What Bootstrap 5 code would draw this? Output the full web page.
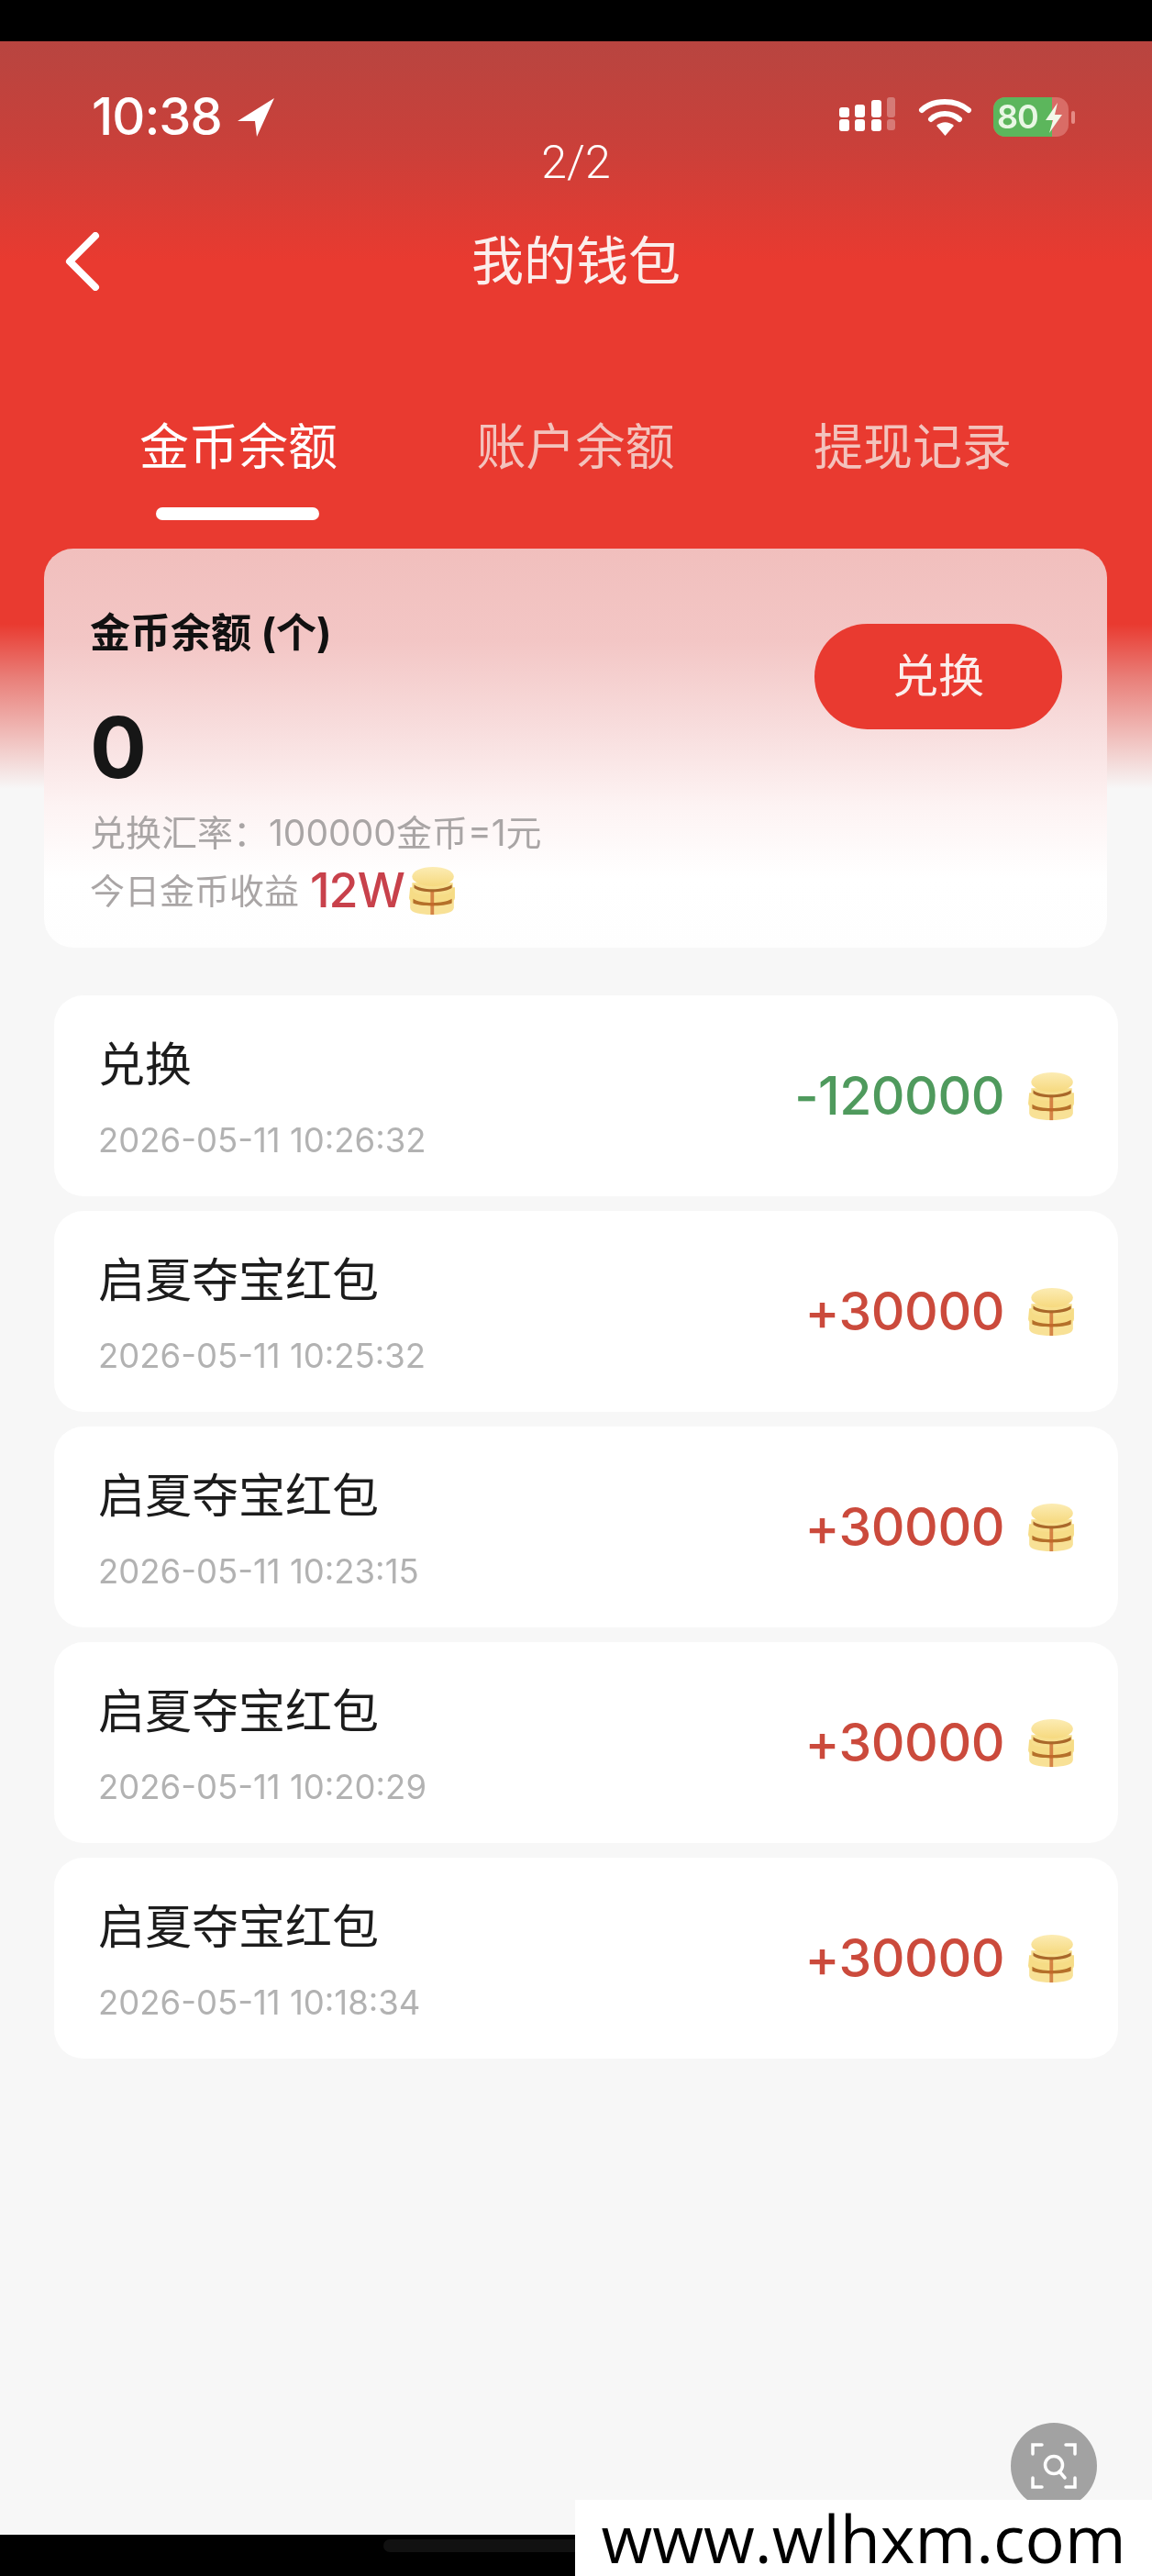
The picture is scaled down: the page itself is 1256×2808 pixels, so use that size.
<!DOCTYPE html>
<html lang="zh-CN">
<head>
  <meta charset="UTF-8" />
  <title>我的钱包</title>
  <meta name="viewport" content="width=device-width, initial-scale=1" />
  <link href="https://cdn.jsdelivr.net/npm/bootstrap@5.3.3/dist/css/bootstrap.min.css" rel="stylesheet" />
  <style>
    body {
      margin: 0;
      width: 1256px;
      height: 2808px;
      overflow: hidden;
      background: #000;
      font-family: Inter, "Noto Sans CJK SC", sans-serif;
      position: relative;
    }
    .top-black { height: 45px; background: #000; }
    .screen {
      height: 2718px;
      padding-top: 55px;
      filter: blur(.7px);
      background: linear-gradient(180deg, #b84540 0, #c9403a 110px, #e93a30 240px, #e93a30 635px, #e9807a 695px, #f7f7f7 815px, #f7f7f7 100%);
    }
    .status-row { height: 55px; padding: 0 83px 0 100px; color: #fff; }
    .status-time { font-size: 56px; font-weight: 500; letter-spacing: -1px; line-height: 55px; }
    .pager { height: 44px; color: #fff; font-size: 50px; line-height: 44px; font-family: Roboto, sans-serif; font-weight: 300; }
    .title-row { height: 64px; margin-top: 54px; color: #fbeeec; font-size: 57px; line-height: 64px; position: relative; }
    .back-icon { position: absolute; left: 66px; top: 0; }
    .tab-row { margin-top: 136px; padding: 0 153px 0 152px; }
    .tab-item { width: 216px; height: 70px; font-size: 54px; line-height: 70px; color: #f3c3bd; white-space: nowrap; }
    .tab-item.on { color: #fff; }
    .tab-mark { width: 178px; height: 14px; margin: 30px 0 0 170px; background: #fff; border-radius: 7px; }
    .wallet-box {
      height: 435px;
      margin: 31px 49px 0 48px;
      padding: 0 49px 0 50px;
      border-radius: 32px;
      background: linear-gradient(180deg, #f1bfbd 0, #f3c6c5 100px, #f8dede 200px, #fdf3f3 280px, #ffffff 360px, #fefefe 100%);
    }
    .wallet-head { margin-top: 70px; font-size: 44px; line-height: 44px; font-weight: 700; color: #111; }
    .wallet-num { margin-top: 53px; font-size: 92px; line-height: 100px; font-weight: 700; color: #161616; }
    .wallet-rate { margin-top: 21px; font-size: 39px; line-height: 44px; color: #a9a5a5; white-space: nowrap; }
    .wallet-today { margin-top: 12px; font-size: 38px; line-height: 58px; color: #a9a5a5; }
    .wallet-today b { font-size: 52px; font-weight: 500; color: #c8414b; margin-left: 12px; letter-spacing: -1px; }
    .swap-btn {
      width: 270px;
      height: 115px;
      margin-top: 82px;
      border: 0;
      border-radius: 58px;
      background: #e93a30;
      color: #fbeeec;
      font-size: 50px;
    }
    .bill-list { margin: 52px 37px 0 59px; gap: 16px; }
    .bill-row { height: 219px; padding: 0 47px 0 48px; background: #fff; border-radius: 32px; }
    .bill-text { padding-top: 6px; }
    .bill-name { font-size: 51px; line-height: 60px; color: #1c1c1c; }
    .bill-time { margin-top: 30px; font-size: 36.500px; line-height: 44px; color: #b2b2b2; }
    .bill-num { font-size: 57px; font-weight: 500; letter-spacing: -.5px; margin-right: 25px; }
    .bill-num.minus { color: #4f9a5d; }
    .bill-num.plus { color: #cb4a3c; }
    .bottom-bar { height: 45px; background: #000; position: relative; }
    .home-pill { position: absolute; left: 418px; top: 5px; width: 300px; height: 14px; background: #111; border-radius: 7px; }
    .lens-btn { position: absolute; left: 1102px; top: 2641px; width: 94px; height: 94px; background: #a2a2a2; border-radius: 50%; }
    .site-mark {
      position: absolute; left: 627px; top: 2725px; width: 629px; height: 83px;
      background: #fff; color: #000; font-family: "Open Sans", sans-serif; font-size: 72px; line-height: 83px; text-align: center;
    }
  </style>
</head>
<body>

  <svg width="0" height="0" class="position-absolute">
    <defs>
      <linearGradient id="gold" x1="0" y1="0" x2="0" y2="1">
        <stop offset="0" stop-color="#fcecb4" />
        <stop offset="1" stop-color="#f6d97f" />
      </linearGradient>
      <filter id="soft"><feGaussianBlur stdDeviation=".7" /></filter>
      <symbol id="coins" viewBox="5 0 48 58" preserveAspectRatio="none">
        <g filter="url(#soft)">
          <path d="M7 40 H51 V48 C51 54 41 56 29 56 C17 56 7 54 7 48 Z" fill="#f8e196" />
          <path d="M7 25 H52 V37 C52 43 42 46 29 46 C16 46 6 43 6 37 Z" fill="#f6dc86" />
          <path d="M10 38 C18 44 40 44 49 38 L49 43 C40 47 18 47 10 43 Z" fill="#b56f2a" />
          <path d="M9 20 H50 V27 C50 33 40 34 29 34 C18 34 9 33 9 27 Z" fill="#f7df8e" />
          <path d="M11 22 C18 29 40 29 49 22 L49 26 C40 32 18 32 11 26 Z" fill="#a9682a" />
          <ellipse cx="30" cy="13" rx="21" ry="11" fill="url(#gold)" />
          <rect x="27.500" y="30" width="3.500" height="26" fill="#c8642c" opacity=".75" />
        </g>
      </symbol>
    </defs>
  </svg>

  <div class="top-black"></div>

  <div class="screen">
    <!-- status bar -->
    <div class="status-row d-flex justify-content-between align-items-center">
      <div class="d-flex align-items-center gap-3">
        <span class="status-time">10:38</span>
        <svg width="42" height="44" viewBox="0 0 42 44"><path d="M41 1 L1 26 L20 26 L22 43 Z" fill="#fff" /></svg>
      </div>
      <svg width="258" height="44" viewBox="0 0 258 44">
        <g fill="#fff">
          <rect x="0" y="24" width="11" height="13" rx="3" /><rect x="17" y="24" width="11" height="13" rx="3" /><rect x="35" y="24" width="11" height="13" rx="3" />
          <rect x="0" y="11" width="11" height="11" rx="3" /><rect x="17" y="8" width="11" height="14" rx="3" /><rect x="35" y="3" width="11" height="19" rx="3" />
          <rect x="52" y="0" width="9" height="22" rx="3" opacity=".3" /><rect x="52" y="24" width="9" height="12" rx="3" opacity=".3" />
        </g>
        <g fill="none" stroke="#fff" stroke-width="6" stroke-linecap="round">
          <path d="M90 14 C103 2 127 2 141 14" />
          <path d="M100 24 C108 16 122 16 131 24" />
        </g>
        <path d="M106 31 C112 26 119 26 125 31 L115.500 42 Z" fill="#fff" />
        <rect x="168" y="0" width="82" height="43" rx="13" fill="#d96c66" />
        <path d="M181 0 H232 V43 H181 A13 13 0 0 1 168 30 V13 A13 13 0 0 1 181 0 Z" fill="#5cb65c" />
        <text x="172" y="34" font-family="Inter, sans-serif" font-size="36" font-weight="600" fill="#e8f7e4" letter-spacing="-1">80</text>
        <path d="M238 6 L225 25 L233 25 L229 39 L243 19 L235 19 Z" fill="#f3f8ea" />
        <rect x="253" y="15" width="4" height="14" rx="2" fill="#e58b85" />
      </svg>
    </div>

    <div class="pager text-center">2/2</div>

    <!-- title -->
    <div class="title-row text-center">
      <svg class="back-icon" width="46" height="64" viewBox="0 0 46 64"><path d="M38 4 L10 32 L38 60" fill="none" stroke="#fff" stroke-width="8" stroke-linecap="round" stroke-linejoin="round" /></svg>
      我的钱包
    </div>

    <!-- tabs -->
    <div class="tab-row d-flex justify-content-between">
      <div class="tab-item on">金币余额</div>
      <div class="tab-item">账户余额</div>
      <div class="tab-item">提现记录</div>
    </div>
    <div class="tab-mark"></div>

    <!-- coin balance -->
    <div class="wallet-box d-flex justify-content-between align-items-start">
      <div>
        <div class="wallet-head">金币余额 (个)</div>
        <div class="wallet-num">0</div>
        <div class="wallet-rate">兑换汇率：100000金币=1元</div>
        <div class="wallet-today d-flex align-items-center">今日金币收益 <b>12W</b>
          <svg class="ms-1" width="52" height="56"><use href="#coins" /></svg>
        </div>
      </div>
      <button type="button" class="btn swap-btn">兑换</button>
    </div>

    <!-- bill list -->
    <div class="bill-list d-flex flex-column">
      <div class="bill-row d-flex justify-content-between align-items-center">
        <div class="bill-text"><div class="bill-name">兑换</div><div class="bill-time">2026-05-11 10:26:32</div></div>
        <div class="d-flex align-items-center"><span class="bill-num minus">-120000</span><svg width="52" height="56"><use href="#coins" /></svg></div>
      </div>
      <div class="bill-row d-flex justify-content-between align-items-center">
        <div class="bill-text"><div class="bill-name">启夏夺宝红包</div><div class="bill-time">2026-05-11 10:25:32</div></div>
        <div class="d-flex align-items-center"><span class="bill-num plus">+30000</span><svg width="52" height="56"><use href="#coins" /></svg></div>
      </div>
      <div class="bill-row d-flex justify-content-between align-items-center">
        <div class="bill-text"><div class="bill-name">启夏夺宝红包</div><div class="bill-time">2026-05-11 10:23:15</div></div>
        <div class="d-flex align-items-center"><span class="bill-num plus">+30000</span><svg width="52" height="56"><use href="#coins" /></svg></div>
      </div>
      <div class="bill-row d-flex justify-content-between align-items-center">
        <div class="bill-text"><div class="bill-name">启夏夺宝红包</div><div class="bill-time">2026-05-11 10:20:29</div></div>
        <div class="d-flex align-items-center"><span class="bill-num plus">+30000</span><svg width="52" height="56"><use href="#coins" /></svg></div>
      </div>
      <div class="bill-row d-flex justify-content-between align-items-center">
        <div class="bill-text"><div class="bill-name">启夏夺宝红包</div><div class="bill-time">2026-05-11 10:18:34</div></div>
        <div class="d-flex align-items-center"><span class="bill-num plus">+30000</span><svg width="52" height="56"><use href="#coins" /></svg></div>
      </div>
    </div>
  </div>

  <div class="bottom-bar"><div class="home-pill"></div></div>

  <div class="lens-btn d-flex align-items-center justify-content-center">
    <svg width="50" height="50" viewBox="0 0 50 50" fill="none" stroke="#fff" stroke-width="3.500" stroke-linecap="round">
      <path d="M2 12 V2 H12 M38 2 H48 V12 M2 38 V48 H12 M48 38 V48 H38" />
      <circle cx="25" cy="24" r="9.500" />
      <path d="M31 31 L37 38" />
    </svg>
  </div>

  <div class="site-mark">www.wlhxm.com</div>

  <script src="https://cdn.jsdelivr.net/npm/bootstrap@5.3.3/dist/js/bootstrap.bundle.min.js"></script>
</body>
</html>
